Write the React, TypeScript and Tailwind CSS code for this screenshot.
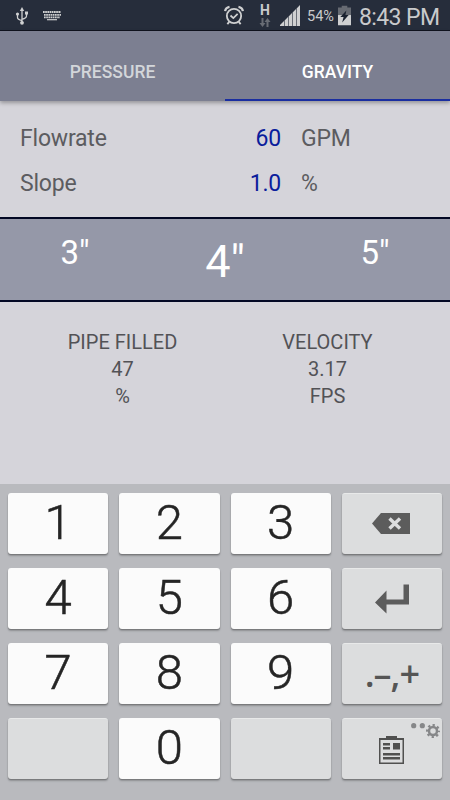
import { ReactNode } from "react"

const sizes = [
  { label: '3"', className: "pt-[15px] text-[33px] leading-[38px]" },
  { label: '4"', className: "pt-[16px] text-[45px] leading-[54px]" },
  { label: '5"', className: "pt-[15px] text-[33px] leading-[38px]" },
]

function StatusBar() {
  return (
    <div className="flex h-[31px] justify-between border-b border-[#10131f] bg-[#262d3b] text-[#c9cacc]">
      <div className="flex pl-[15px]">
        <svg className="mt-[7px] h-[18px] w-[14px]" viewBox="0 0 14 18" fill="none" stroke="#cfd0d1" strokeWidth="1.3">
          <path d="M7 3v13M2.500 8v2.500q0 2 4.500 3M11.500 7v2q0 2-4.500 3.300" />
          <path d="M7 0l2.200 4H4.800z" fill="#cfd0d1" stroke="none" />
          <circle cx="2.500" cy="7" r="1.600" fill="#cfd0d1" stroke="none" />
          <path d="M10 4.500h3v3h-3z" fill="#cfd0d1" stroke="none" />
          <circle cx="7" cy="15.800" r="1.900" fill="#cfd0d1" stroke="none" />
        </svg>
        <svg className="mt-[11px] ml-[14px] h-[10px] w-[18px]" viewBox="0 0 18 10" stroke="#cfd0d1">
          <path d="M0 1h18" strokeWidth="1.800" strokeDasharray="1.700 .5" />
          <path d="M1 3.800h17" strokeWidth="1.800" strokeDasharray="1.700 .5" />
          <path d="M1 6.400h16" strokeWidth="1.800" strokeDasharray="1.700 .5" />
          <path d="M4 8.700h10" strokeWidth="1.200" />
        </svg>
      </div>
      <div className="flex">
        <svg className="mt-[5px] mr-px h-[21px] w-[20px]" viewBox="0 0 21 21" fill="none" stroke="#cfd0d1">
          <circle cx="10.500" cy="11" r="7.500" strokeWidth="1.900" />
          <path d="M6.800 10.500l3 2.800 4.500-4.500" strokeWidth="1.800" />
          <path d="M1.200 6q.5-3.800 4.600-4.500M19.800 6q-.5-3.800-4.600-4.500" strokeWidth="2.400" />
          <path d="M5.500 17.200l-2 2.300M15.500 17.200l2 2.300" strokeWidth="2" />
        </svg>
        <div className="mt-[4px] ml-[14px] w-[12px]">
          <div className="h-[13px] text-center text-[14px] leading-[13px] font-bold">H</div>
          <svg className="mt-px h-[9px] w-[12px]" viewBox="0 0 12 9" fill="#686c74">
            <path d="M2.500 0h2v5h2l-3 4-3-4h2zM7.500 9h2V4h2l-3-4-3 4h2z" />
          </svg>
        </div>
        <svg className="mt-[5px] ml-[9px] h-[21px] w-[21px]" viewBox="0 0 21 21" fill="#cfd0d1">
          <path d="M0 21v-1l4-4v5zM4.600 21v-5.600l3.400-3.400v9zM8.600 21v-9.600l3.400-3.400v13zM12.600 21V7.400l3.400-3.400v17zM16.600 21V3.400l3.400-3.400v21z" />
        </svg>
        <div className="mt-[9px] ml-[6px] w-[27px] text-[14.5px] leading-[16px] whitespace-nowrap">54%</div>
        <svg className="mt-[5px] ml-[4px] h-[21px] w-[13px]" viewBox="0 0 14 21">
          <path d="M4 0h6v2h4v9H0V2h4z" fill="#666a72" />
          <path d="M0 10h14v11H0z" fill="#cfd0d1" />
          <path d="M9 5l-6.500 7H6l-1.500 6L11.500 10H8z" fill="#1b2230" />
        </svg>
        <div className="mt-[4px] ml-[8px] w-[91px] text-[23px] leading-[27px] tracking-[-0.6px] whitespace-nowrap">8:43 PM</div>
      </div>
    </div>
  )
}

function InputRow({ label, value, unit }: { label: string; value: string; unit: string }) {
  return (
    <div className="flex h-[45px] items-center text-[23px] tracking-[-0.2px] text-[#5c5c60]">
      <div className="w-[150px] pl-[20px]">{label}</div>
      <div className="w-[131px] text-right text-[#0a1d9c]">{value}</div>
      <div className="pl-[20px]">{unit}</div>
    </div>
  )
}

function Result({ title, value, unit }: { title: string; value: string; unit: string }) {
  return (
    <div className="w-[205px] text-center text-[20px] leading-[27px] text-[#525256]">
      <div>{title}</div>
      <div>{value}</div>
      <div>{unit}</div>
    </div>
  )
}

function Key({ children, light }: { children?: ReactNode; light?: boolean }) {
  return (
    <div
      className={`relative flex h-[61px] items-center justify-center rounded-[3px] shadow-[0_1px_1px_#77787b,0_2px_2px_#929396] ${
        light
          ? "bg-[#fbfbfb] pb-px text-[49px] leading-[58px] font-light text-[#252525] [-webkit-text-stroke:0.5px_#252525]"
          : "border-t border-[#e8e9e9] bg-[#dcddde]"
      }`}
    >
      {children}
    </div>
  )
}

function Keypad() {
  return (
    <div className="grid h-[316px] grid-cols-4 content-start gap-x-[11px] gap-y-[14px] bg-[#b9babe] px-[8px] pt-[9px]">
      <Key light>1</Key>
      <Key light>2</Key>
      <Key light>3</Key>
      <Key>
        <svg className="mr-px mb-px h-[21px] w-[38px]" viewBox="0 0 38 21">
          <path d="M0 10.500L9 0h29v21H9z" fill="#5c5c5c" />
          <path d="M17.500 5.500l10.500 10M28 5.500L17.500 15.500" stroke="#dcddde" strokeWidth="3.400" />
        </svg>
      </Key>
      <Key light>4</Key>
      <Key light>5</Key>
      <Key light>6</Key>
      <Key>
        <svg className="mb-px h-[30px] w-[34px]" viewBox="0 0 34 30" fill="#5c5c5c">
          <path d="M0 18.500L11.500 6.500v9H28.500V.5H34v20H11.500v9z" />
        </svg>
      </Key>
      <Key light>7</Key>
      <Key light>8</Key>
      <Key light>9</Key>
      <Key>
        <div className="font-['Open_Sans'] text-[36px] leading-[40px] font-semibold tracking-[-1px] text-[#555]">.–,+</div>
      </Key>
      <Key />
      <Key light>0</Key>
      <Key />
      <Key>
        <svg className="mt-[2px] mr-px h-[28px] w-[25px]" viewBox="0 0 25 28" fill="#50504f">
          <path d="M7 0h11v2h7v26H0V2h7zM1.500 4v22.500h22V4z" fillRule="evenodd" />
          <path d="M4 7h7v2.500H4zM4 11h7v2.500H4zM14 7h7v6.500h-7zM4 17h17v2.500H4zM4 21h17v2.500H4z" />
        </svg>
        <svg className="absolute top-[3px] right-[2px] h-[16px] w-[29px]" viewBox="0 0 29 16" fill="#868789">
          <circle cx="2.700" cy="3.700" r="2.600" />
          <circle cx="11.300" cy="3.700" r="2.600" />
          <circle cx="22" cy="9" r="4" fill="none" stroke="#868789" strokeWidth="2.500" />
          <circle cx="22" cy="9" r="5.900" fill="none" stroke="#868789" strokeWidth="2.200" strokeDasharray="2.300 2.334" strokeDashoffset="1.150" />
        </svg>
      </Key>
    </div>
  )
}

export default function App() {
  return (
    <div className="h-[800px] w-[450px] overflow-hidden bg-[#d5d4da] font-[Roboto,sans-serif]">
      <StatusBar />
      <div className="relative flex h-[70px] bg-[#7c7f91] text-center text-[17.5px] leading-[20px] font-medium shadow-[0_2px_4px_rgba(0,0,0,0.3)]">
        <div className="w-[225px] pt-[31px] text-[#d3d6da]">PRESSURE</div>
        <div className="w-[225px] border-b-2 border-[#1a2ea0] pt-[31px] text-white">GRAVITY</div>
      </div>
      <div className="h-[116px] pt-[16px]">
        <InputRow label="Flowrate" value="60" unit="GPM" />
        <InputRow label="Slope" value="1.0" unit="%" />
      </div>
      <div className="flex h-[85px] border-y-2 border-[#030824] bg-[#9598a8] text-center text-white">
        {sizes.map((size) => (
          <div key={size.label} className={`w-[150px] ${size.className}`}>
            {size.label}
          </div>
        ))}
      </div>
      <div className="flex h-[182px] px-[20px] pt-[27px]">
        <Result title="PIPE FILLED" value="47" unit="%" />
        <Result title="VELOCITY" value="3.17" unit="FPS" />
      </div>
      <Keypad />
    </div>
  )
}
